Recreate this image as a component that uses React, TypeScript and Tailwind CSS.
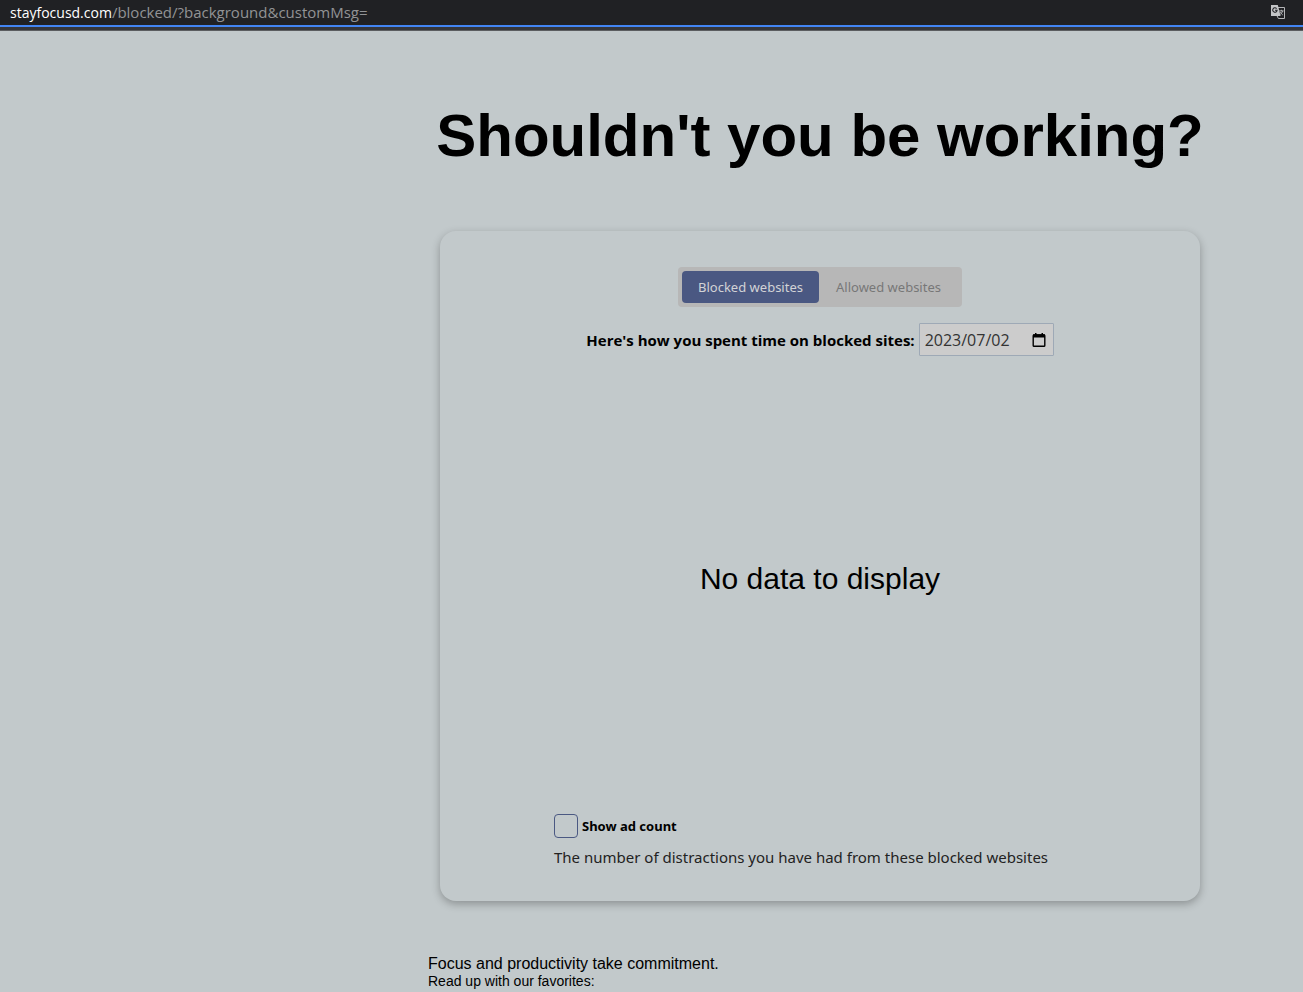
import { useState } from "react";

const uiFont = "font-['Segoe_UI','Noto_Sans',sans-serif]";
const openFont = "font-['Segoe_UI','Open_Sans',sans-serif]";

function TranslateIcon() {
  return (
    <svg width="16" height="16" viewBox="0 0 16 16" aria-hidden="true">
      <path d="M7 3.5h7.5v11H8.4L6.6 11" fill="#202124" stroke="#b4b5b7" strokeWidth="1" />
      <path d="M1 1h6.8l2.8 11H1z" fill="#c4c5c7" />
      <path d="M6.6 4.6a2.2 2.2 0 1 0 .5 1.7H5" fill="none" stroke="#202124" strokeWidth="1.1" />
      <path d="M9.2 6.9h4.4M11.4 5.8v1.1M12.6 7c-.4 1.6-1.4 2.8-2.4 3.6M10.4 8.2c.6 1.2 1.4 2 2.4 2.8" fill="none" stroke="#b4b5b7" strokeWidth="1" />
    </svg>
  );
}

function CalendarIcon() {
  return (
    <svg width="14" height="16" viewBox="0 0 14 16" aria-hidden="true">
      <path d="M3 1h1.5v2H3zM9.5 1H11v2H9.5z" fill="#000" />
      <path d="M1 2.3h12v3.2H1z" fill="#000" />
      <rect x="1.2" y="3" width="11.6" height="11.2" rx="0.8" fill="none" stroke="#000" strokeWidth="1.4" />
    </svg>
  );
}

function AddressBar() {
  return (
    <header className="flex h-[31px] flex-col bg-[#202124]">
      <div className={`flex h-[25px] items-start justify-between pr-[17px] pl-[10px] leading-6 ${openFont}`}>
        <a href="#blocked" className="text-[15px] text-[#929395]">
          <span className="text-[14px] text-white">stayfocusd.com</span>/blocked/?background&amp;customMsg=
        </a>
        <button type="button" aria-label="Translate this page" className="flex h-6 items-center">
          <TranslateIcon />
        </button>
      </div>
      <div className="h-0.5 bg-[#4285f4]" />
      <div className="h-[3px] bg-[#35363a]" />
      <div className="h-px bg-[#5b5d60]" />
    </header>
  );
}

export default function App() {
  const [tab, setTab] = useState("Blocked");
  const [date, setDate] = useState("2023/07/02");

  return (
    <div className="min-h-screen bg-[#c2c9cb] text-black">
      <AddressBar />
      <main className="flex justify-center pl-[337px]">
        <div className="flex w-[784px] flex-col items-center font-['Liberation_Sans',Arial,sans-serif]">
          <h1 className="pt-[70px] text-[60px] leading-[70px] font-bold whitespace-nowrap">Shouldn't you be working?</h1>

          <section className={`mt-[60px] flex w-[760px] max-w-full flex-col items-center rounded-2xl px-[114px] pt-9 pb-8 shadow-[0_3px_8px_rgba(0,0,0,0.28)] ${uiFont}`}>
            <div role="tablist" className="flex rounded bg-[#b7b7b7] p-1 text-[13px] leading-6">
              {["Blocked", "Allowed"].map((name) => (
                <button
                  key={name}
                  type="button"
                  role="tab"
                  aria-selected={tab === name}
                  onClick={() => setTab(name)}
                  className={
                    tab === name
                      ? "h-8 w-[137px] rounded bg-[#4a5882] text-[#d2d3d6]"
                      : "h-8 w-[139px] rounded text-[#777777]"
                  }
                >
                  {name} websites
                </button>
              ))}
            </div>

            <div className={`mt-4 flex items-center gap-1 whitespace-nowrap ${openFont}`}>
              <label htmlFor="date" className="text-[15px] leading-6 font-bold">
                Here's how you spent time on blocked sites:
              </label>
              <div className="flex h-[33px] w-[135px] items-center justify-between rounded-[1px] border border-[#9ea9b6] bg-[#cccccc] pr-[7px] pl-[5px]">
                <input
                  id="date"
                  value={date}
                  onChange={(e) => setDate(e.target.value)}
                  className="w-[100px] bg-transparent text-[16px] leading-6 text-[#333333] outline-none"
                />
                <button type="button" aria-label="Choose a date">
                  <CalendarIcon />
                </button>
              </div>
            </div>

            <p className="flex h-[446px] items-center font-['Liberation_Sans',Arial,sans-serif] text-[30px] leading-9">
              No data to display
            </p>

            <div className="mt-3 w-full">
              <label className="flex items-center gap-1 text-[13px] leading-6 font-bold">
                <input type="checkbox" className="size-6 appearance-none rounded border border-[#4a5882] checked:bg-[#4a5882]" />
                Show ad count
              </label>
              <p className="mt-[7px] text-[15px] leading-6 whitespace-nowrap text-[#222222]">
                The number of distractions you have had from these blocked websites
              </p>
            </div>
          </section>

          <footer className="mt-[54px] w-full">
            <p className="text-[16px] leading-[18px]">Focus and productivity take commitment.</p>
            <p className="text-[14px] leading-4">Read up with our favorites:</p>
          </footer>
        </div>
      </main>
    </div>
  );
}
